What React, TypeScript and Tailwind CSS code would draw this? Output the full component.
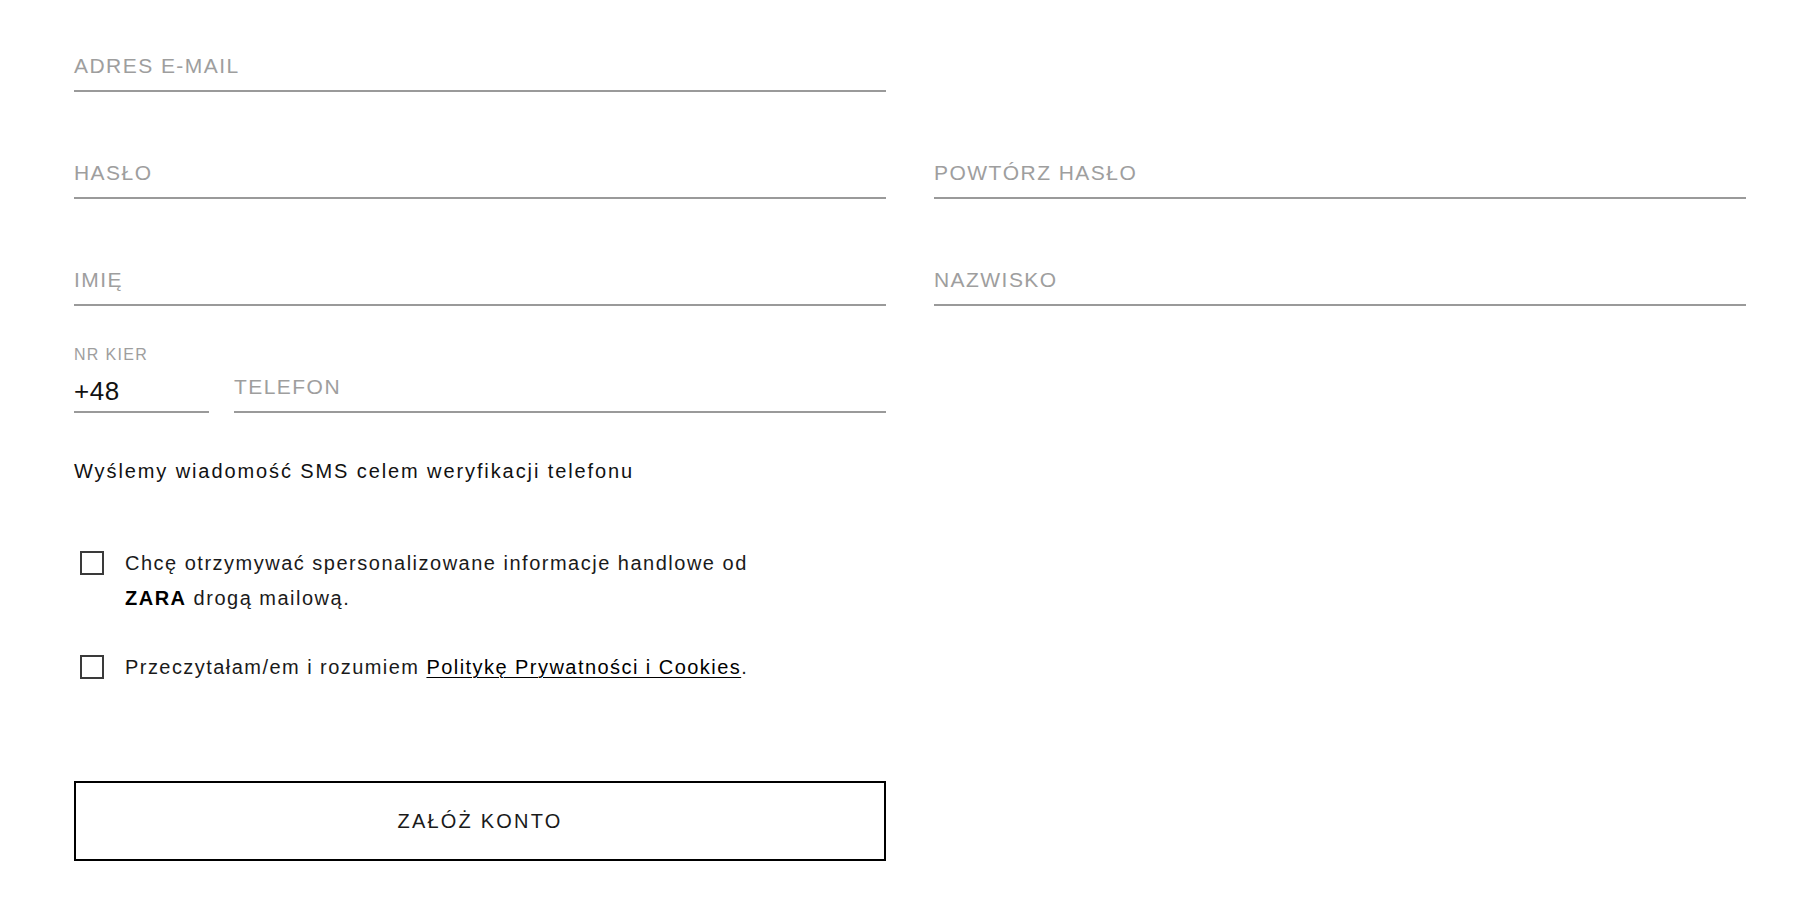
import React from "react";

function Field({ label, className = "" }: { label: string; className?: string }) {
  return (
    <div className={"border-b-2 border-[#9a9a9a] pb-[12px] " + className}>
      <span className="block text-[21px] leading-[24px] tracking-[1.45px] text-[#9e9e9e]">{label}</span>
    </div>
  );
}

function Box() {
  return <span className="mt-[5px] ml-[6px] block h-[24px] w-[24px] shrink-0 border-2 border-[#3a3a3a] bg-white" />;
}

export default function App() {
  return (
    <div className="min-h-screen bg-white pt-[54px] pl-[74px] font-['Liberation_Sans',Arial,sans-serif]">
      <div className="grid grid-cols-[812px_812px] gap-x-[48px] gap-y-[69px]">
        <Field label="ADRES E-MAIL" />
        <div />
        <Field label="HASŁO" />
        <Field label="POWTÓRZ HASŁO" />
        <Field label="IMIĘ" />
        <Field label="NAZWISKO" />
      </div>

      <div className="mt-[39px] flex w-[812px] items-end gap-[25px]">
        <div className="w-[135px] shrink-0">
          <div className="text-[16px] leading-[20px] tracking-[1.3px] text-[#9e9e9e]">NR KIER</div>
          <div className="mt-[11px] border-b-2 border-[#9a9a9a] pb-[5px] text-[26px] leading-[30px] tracking-[0.5px] text-[#111]">+48</div>
        </div>
        <Field label="TELEFON" className="flex-1" />
      </div>

      <p className="mt-[46px] text-[20px] leading-[24px] tracking-[1.9px] text-[#111]">
        Wyślemy wiadomość SMS celem weryfikacji telefonu
      </p>

      <div className="mt-[63px] flex items-start">
        <Box />
        <p className="ml-[21px] w-[660px] text-[20px] leading-[35px] tracking-[1.5px] text-[#1a1a1a]">
          Chcę otrzymywać spersonalizowane informacje handlowe od <b className="font-bold text-black">ZARA</b> drogą mailową.
        </p>
      </div>

      <div className="mt-[34px] flex items-start">
        <Box />
        <p className="ml-[21px] w-[700px] text-[20px] leading-[35px] tracking-[1.45px] text-[#1a1a1a]">
          Przeczytałam/em i rozumiem{" "}
          <a className="text-black underline decoration-1 underline-offset-[3px]">Politykę Prywatności i Cookies</a>.
        </p>
      </div>

      <button className="mt-[96px] flex h-[80px] w-[812px] items-center justify-center border-2 border-black bg-white text-[20px] tracking-[2.2px] text-[#1a1a1a]">
        ZAŁÓŻ KONTO
      </button>
    </div>
  );
}
